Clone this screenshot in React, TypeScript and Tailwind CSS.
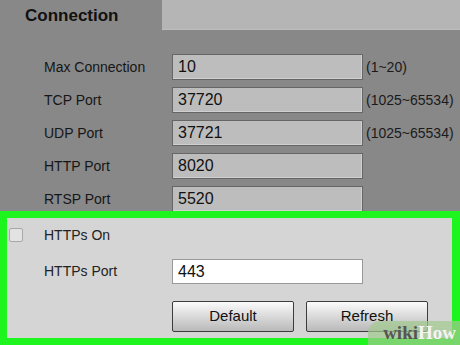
import React from "react";

const rows = [
  { label: "Max Connection", value: "10", range: "(1~20)" },
  { label: "TCP Port", value: "37720", range: "(1025~65534)" },
  { label: "UDP Port", value: "37721", range: "(1025~65534)" },
  { label: "HTTP Port", value: "8020", range: "" },
  { label: "RTSP Port", value: "5520", range: "" },
];

export default function App() {
  return (
    <div
      className="relative w-[460px] h-[345px] overflow-hidden bg-[#888888] text-[#141414]"
      style={{ fontFamily: '"Liberation Sans", Arial, sans-serif' }}
    >
      {/* Tab bar */}
      <div className="flex h-[30px]">
        <div className="w-[162px] flex items-center pl-[25px] pt-[1px] text-[17px] font-bold text-[#111]">
          Connection
        </div>
        <div className="flex-1 bg-[#b5b5b5] border-b border-[#bdbdbd]" />
      </div>

      {/* Rows */}
      <div className="flex flex-col gap-[7px] pt-[24px]">
        {rows.map((r) => (
          <div key={r.label} className="flex items-center h-[26px]">
            <div className="w-[172px] pl-[44px] text-[14px] text-[#161616]">{r.label}</div>
            <div className="w-[191px] h-[26px] bg-[#bdbdbd] border border-[#666] shadow-[inset_-1px_-1px_0_#d0d0d0] flex items-center pl-[5px] text-[16px] text-[#111]">
              {r.value}
            </div>
            <div className="pl-[3px] text-[14px] text-[#1a1a1a]">{r.range}</div>
          </div>
        ))}
      </div>

      {/* Highlighted HTTPS panel */}
      <div className="absolute left-0 right-0 top-[211px] bottom-0 border-t-[7px] border-l-[7px] border-r-[8px] border-b-[7px] border-[#1ef51e] bg-[#d5d5d5] flex flex-col pt-[10px]">
        <div className="flex items-center h-[14px]">
          <div className="ml-[2px] w-[14px] h-[14px] rounded-[2px] border border-[#a8a8a8] bg-[#e2e2e2]" />
          <div className="pl-[21px] text-[14px] text-[#222]">HTTPs On</div>
        </div>
        <div className="flex items-center h-[25px] mt-[17px]">
          <div className="w-[165px] pl-[37px] text-[14px] text-[#222]">HTTPs Port</div>
          <div className="w-[191px] h-[25px] bg-white border border-[#999] flex items-center pl-[5px] text-[16px] text-[#111]">
            443
          </div>
        </div>
        <div className="flex mt-[17px] pl-[165px] gap-[12px]">
          <button className="w-[122px] h-[31px] border border-[#3c3c3c] rounded-[2px] bg-gradient-to-b from-[#fbfbfb] to-[#b9b9b9] text-[15px] text-[#111]">
            Default
          </button>
          <button className="w-[122px] h-[31px] border border-[#3c3c3c] rounded-[2px] bg-gradient-to-b from-[#fbfbfb] to-[#b9b9b9] text-[15px] text-[#111]">
            Refresh
          </button>
        </div>
      </div>

      {/* wikiHow watermark */}
      <div
        className="absolute right-0 bottom-0 w-[92px] h-[24px] bg-[#9fc98f]/70 rounded-tl-[12px] flex items-center justify-end pr-[4px] text-[19px] font-bold"
        style={{ fontFamily: '"Liberation Serif", "DejaVu Serif", serif' }}
      >
        <span className="text-[#555]">wiki</span>
        <span className="text-[#f4f4f4]">How</span>
      </div>
    </div>
  );
}
